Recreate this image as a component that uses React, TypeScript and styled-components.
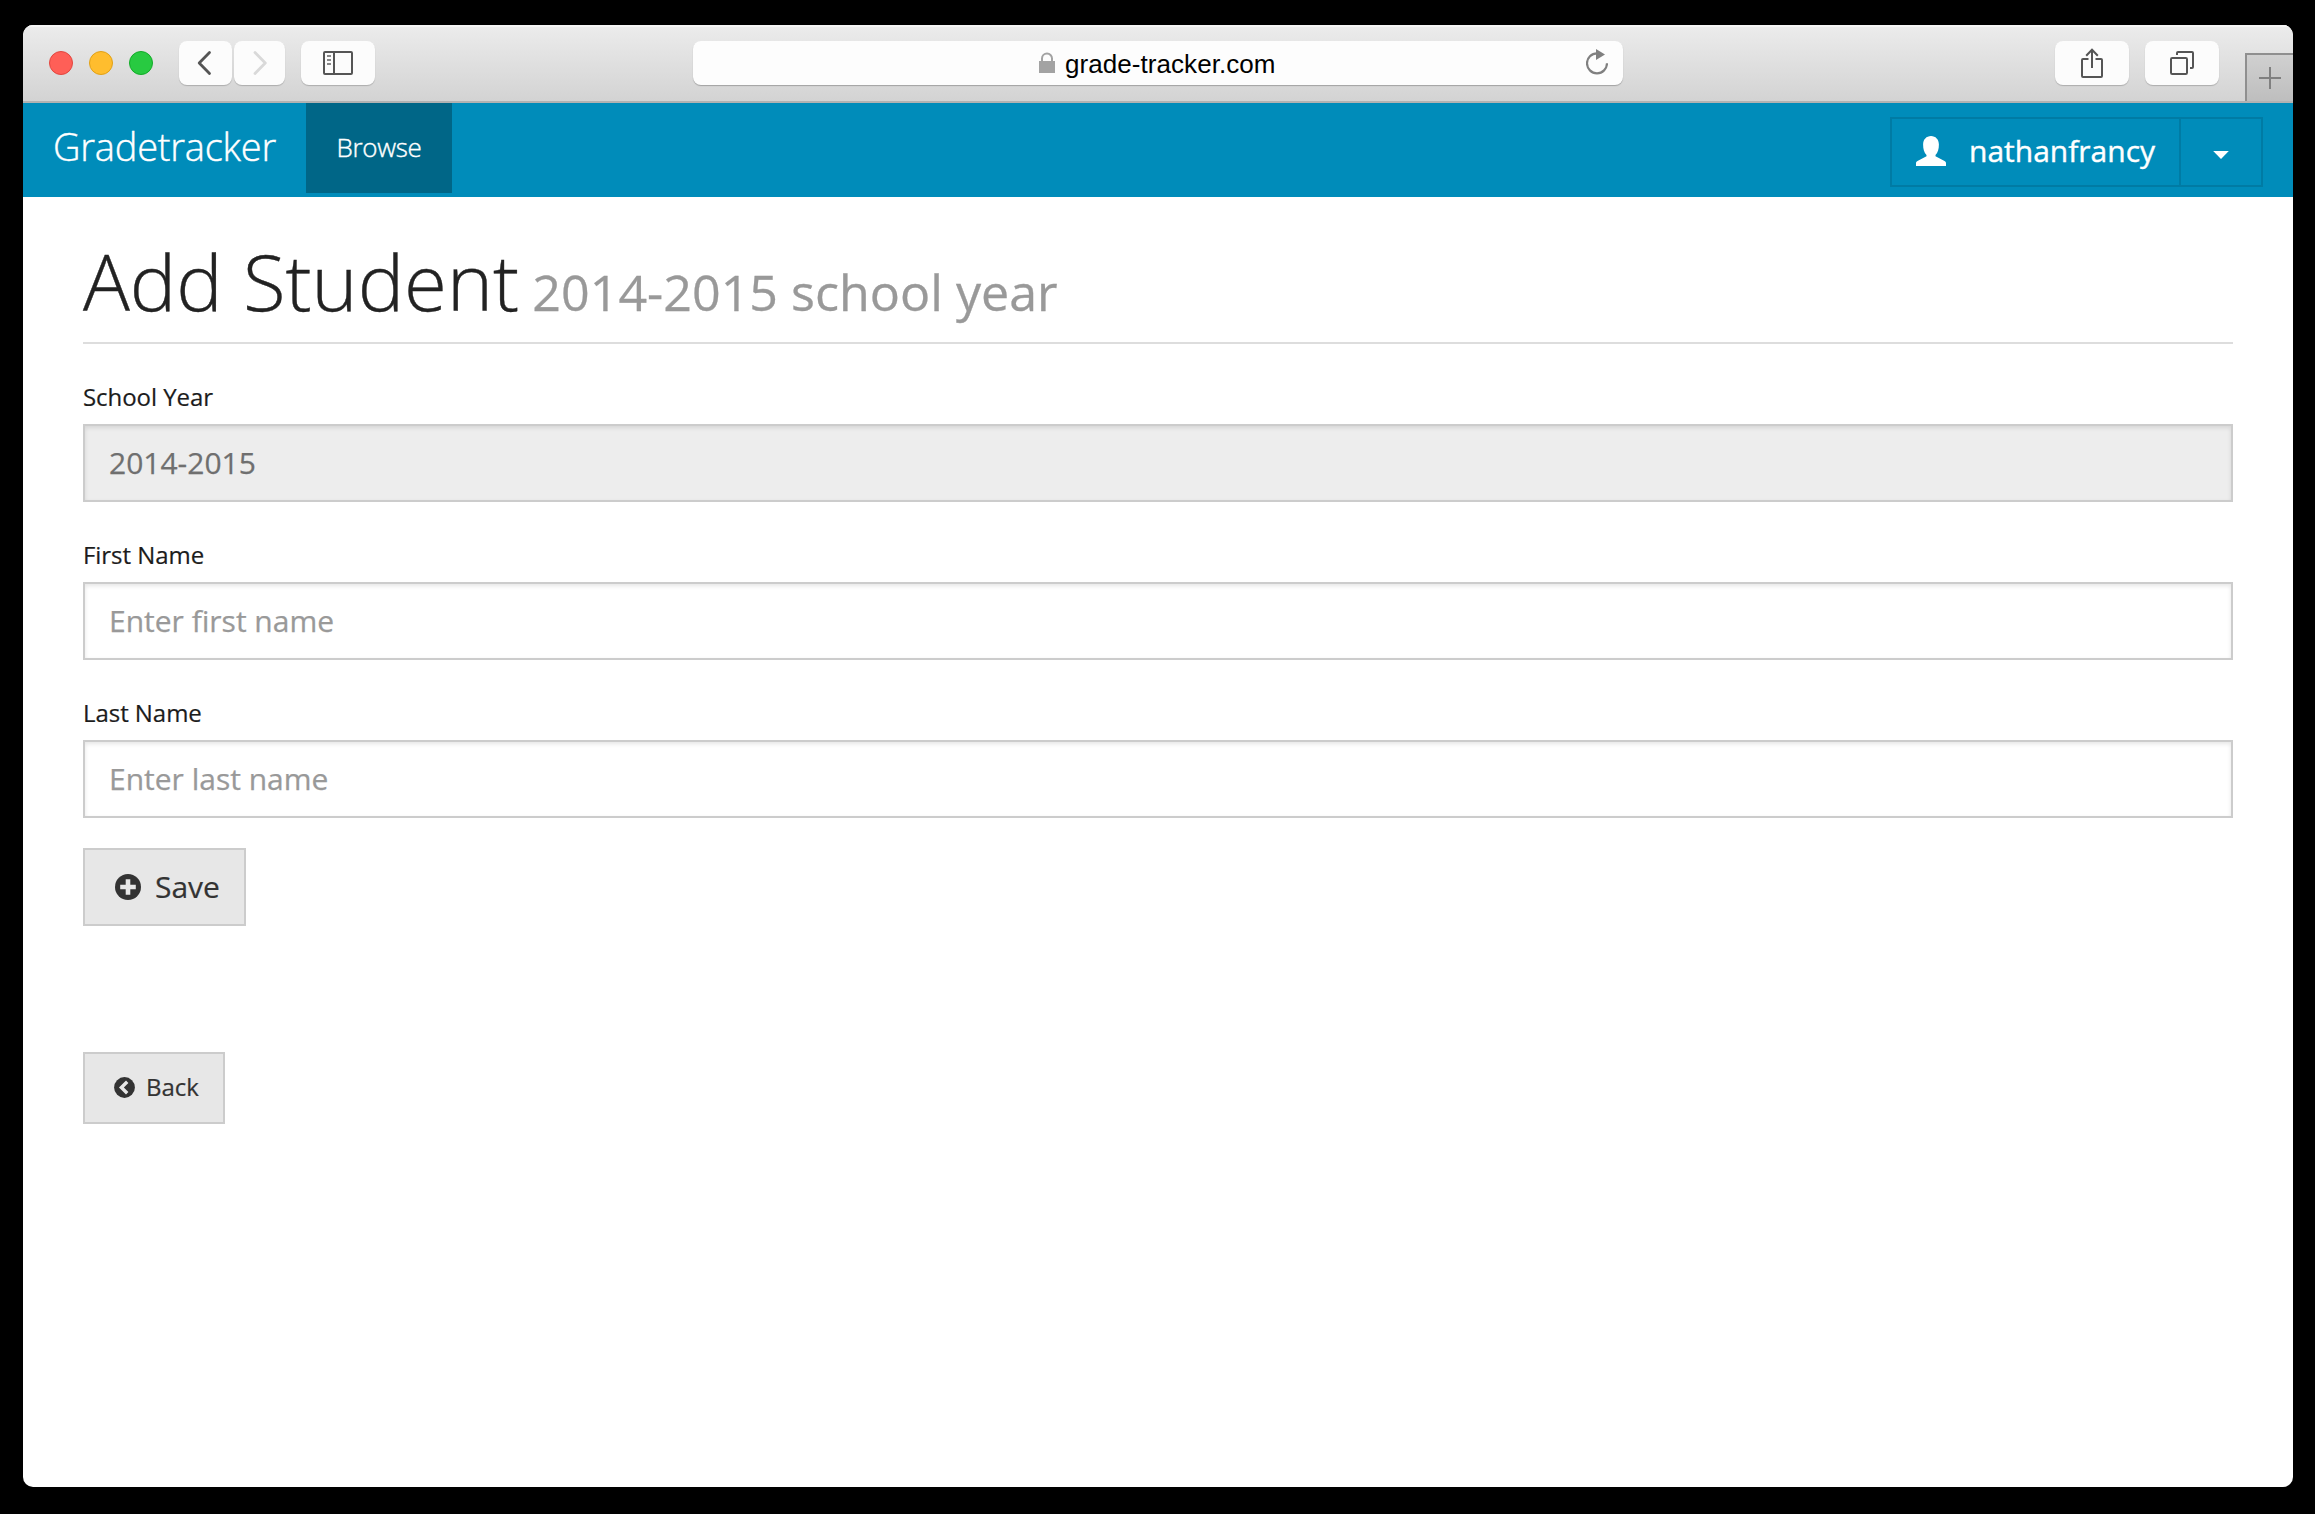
import React from 'react';
import styled, { createGlobalStyle } from 'styled-components';

const GlobalStyle = createGlobalStyle`
  *, *::before, *::after { box-sizing: border-box; }
  html, body { margin: 0; background: #000; }
  body { font-family: 'Open Sans', 'Liberation Sans', sans-serif; color: #222; }
  svg { display: block; flex: none; }
`;

const Desktop = styled.div`
  width: 2315px;
  height: 1514px;
  padding: 25px 22px 27px 23px;
  background: #000;
  overflow: hidden;
`;

const Window = styled.div`
  display: flex;
  flex-direction: column;
  height: 100%;
  border-radius: 10px;
  background: #fff;
  overflow: hidden;
`;

const Toolbar = styled.div`
  display: flex;
  align-items: flex-start;
  height: 78px;
  padding: 16px 0 0 26px;
  background: linear-gradient(#ececec, #d3d3d3);
  border-bottom: 2px solid #b2b2b2;
  box-shadow: inset 0 2px 0 #f5f5f5;
`;

const Lights = styled.div`
  display: flex;
  align-items: center;
  gap: 16px;
  height: 44px;
  margin-right: 26px;
`;

const Light = styled.span<{ $fill: string; $edge: string }>`
  width: 24px;
  height: 24px;
  border-radius: 50%;
  background: ${(p) => p.$fill};
  border: 1px solid ${(p) => p.$edge};
`;

const ToolButton = styled.button<{ $width?: number; $after?: number; $trail?: number }>`
  display: flex;
  align-items: center;
  justify-content: center;
  width: ${(p) => p.$width ?? 74}px;
  height: 44px;
  margin: 0 ${(p) => p.$after ?? 0}px 0 0;
  padding: 0 ${(p) => p.$trail ?? 0}px 0 0;
  border: 0;
  border-radius: 8px;
  background: #fcfcfc;
  box-shadow: 0 1px 1px rgba(0, 0, 0, 0.2);
`;

const AddressBar = styled.div`
  display: flex;
  align-items: center;
  width: 930px;
  height: 44px;
  margin: 0 432px 0 318px;
  padding: 0 15px 0 346px;
  border-radius: 8px;
  background: #fdfdfd;
  box-shadow: 0 1px 1px rgba(0, 0, 0, 0.25);
`;

const Address = styled.span`
  flex: 1;
  margin-left: 10px;
  font: 26px/44px 'Liberation Sans', sans-serif;
  letter-spacing: 0.06px;
  color: #000;
  padding-top: 2px;
`;

const NewTab = styled.button`
  display: flex;
  align-items: center;
  justify-content: center;
  width: 48px;
  height: 48px;
  margin: 12px 0 0 auto;
  padding: 0;
  border: solid #8f8f8f;
  border-width: 2px 0 0 2px;
  background: linear-gradient(#d0d0d0, #bebebe);
`;

const NavBar = styled.nav`
  display: flex;
  height: 94px;
  padding-left: 30px;
  background: #008cba;
  -webkit-text-stroke: 0.4px #fff;
`;

const Brand = styled.a`
  width: 253px;
  font-size: 38px;
  font-weight: 300;
  letter-spacing: -0.22px;
  line-height: 87px;
  color: #fff;
`;

const NavItem = styled.a`
  width: 146px;
  height: 90px;
  background: #006687;
  color: #fff;
  font-size: 26px;
  font-weight: 300;
  letter-spacing: -0.3px;
  line-height: 88px;
  text-align: center;
`;

const UserMenu = styled.div`
  display: flex;
  height: 70px;
  margin: 14px 30px 0 auto;
  border: 2px solid #007ba4;
  color: #fff;
`;

const UserName = styled.button`
  display: flex;
  align-items: center;
  width: 287px;
  padding: 0 0 3px 24px;
  border: 0;
  background: none;
  color: inherit;
  font: 30px/64px 'Open Sans', sans-serif;
  gap: 23px;
`;

const UserCaret = styled.button`
  display: flex;
  align-items: center;
  justify-content: center;
  width: 82px;
  padding: 6px 0 0;
  border: 0;
  border-left: 2px solid #007ba4;
  background: none;
`;

const Page = styled.main`
  flex: 1;
  padding: 22px 60px 0;
`;

const Title = styled.h1`
  height: 125px;
  margin: 0 0 35px;
  padding-top: 3px;
  border-bottom: 2px solid #ddd;
  font-size: 78px;
  font-weight: 300;
  line-height: 118px;
  color: #222;
  white-space: nowrap;
  -webkit-text-stroke: 0.4px #222;
`;

const Subtitle = styled.small`
  font-size: 50.2px;
  font-weight: 400;
  color: #999;
  margin-left: -7px;
  -webkit-text-stroke: 0.3px #999;
`;

const Field = styled.label`
  display: block;
  margin-bottom: 35px;
`;

const FieldLabel = styled.span`
  display: block;
  margin-bottom: 9px;
  font-size: 24px;
  letter-spacing: -0.05px;
  line-height: 36px;
  color: #1c1c1c;
  -webkit-text-stroke: 0.2px #1c1c1c;
`;

const TextInput = styled.input`
  display: block;
  width: 100%;
  height: 78px;
  padding: 0 24px 2px;
  border: 2px solid #ccc;
  border-radius: 0;
  background: #fff;
  box-shadow: inset 0 2px 4px rgba(0, 0, 0, 0.1);
  font: 30px 'Open Sans', sans-serif;
  color: #6f6f6f;
  -webkit-text-stroke: 0.25px currentColor;
  &::placeholder { color: #999; opacity: 1; }
  &:read-only { background: #ededed; }
`;

const ActionButton = styled.button<{ $small?: boolean }>`
  display: flex;
  align-items: center;
  gap: ${(p) => (p.$small ? 11 : 14)}px;
  width: ${(p) => (p.$small ? 142 : 163)}px;
  height: ${(p) => (p.$small ? 72 : 78)}px;
  margin-top: ${(p) => (p.$small ? 126 : -5)}px;
  padding: 0 0 ${(p) => (p.$small ? 2 : 0)}px ${(p) => (p.$small ? 29 : 30)}px;
  border: 2px solid #ccc;
  background: #e7e7e7;
  color: #333;
  font: ${(p) => (p.$small ? 24 : 30)}px 'Open Sans', sans-serif;
  -webkit-text-stroke: 0.2px #333;
`;

const ButtonText = styled.span`
  margin-top: -2px;
`;

const Chevron = ({ forward = false }: { forward?: boolean }) => (
  <svg width="16" height="26" viewBox="0 0 16 26" fill="none"
    stroke={forward ? '#d9d9d9' : '#555'} strokeWidth="2.8" strokeLinecap="round" strokeLinejoin="round">
    <path d={forward ? 'M3 2.5L13.3 13L3 23.5' : 'M13.5 2.5L3.2 13L13.5 23.5'} />
  </svg>
);

const SidebarIcon = () => (
  <svg width="30" height="24" viewBox="0 0 30 24" fill="none" stroke="#555" strokeWidth="2">
    <rect x="1" y="1" width="28" height="22" rx="1" />
    <path d="M11 1V23" />
    <path d="M4 5H8M4 9H8M4 13H8" stroke="#888" />
  </svg>
);

const LockIcon = () => (
  <svg width="16" height="22" viewBox="0 0 16 22">
    <rect y="9" width="16" height="12" fill="#a3a3a3" />
    <path d="M3 10V6.5a5 5 0 0 1 10 0V10" fill="none" stroke="#a3a3a3" strokeWidth="2" />
  </svg>
);

const ReloadIcon = () => (
  <svg width="22" height="28" viewBox="0 0 22 28">
    <path d="M11 4.3A10 10 0 1 0 21 14.3" fill="none" stroke="#808080" strokeWidth="2.2" />
    <path d="M10 0L19 5.5L10 11Z" fill="#808080" />
  </svg>
);

const ShareIcon = () => (
  <svg width="22" height="32" viewBox="0 0 22 32" fill="none" stroke="#555" strokeWidth="2">
    <path d="M7.5 12H2a1 1 0 0 0-1 1V29a1 1 0 0 0 1 1H20a1 1 0 0 0 1-1V13a1 1 0 0 0-1-1H14.5" />
    <path d="M11 21V3M5.2 8.7L11 2.7L16.8 8.7" />
  </svg>
);

const TabsIcon = () => (
  <svg width="24" height="24" viewBox="0 0 24 24" fill="none" stroke="#555" strokeWidth="2">
    <rect x="1" y="7" width="16" height="16" rx="1.2" />
    <path d="M7 4V2a1 1 0 0 1 1-1H22a1 1 0 0 1 1 1V16a1 1 0 0 1-1 1H20" />
  </svg>
);

const PlusIcon = () => (
  <svg width="22" height="22" viewBox="0 0 22 22" stroke="#808080" strokeWidth="2">
    <path d="M11 0V22M0 11H22" />
  </svg>
);

const PersonIcon = () => (
  <svg width="30" height="30" viewBox="0 0 30 30" fill="#fff">
    <path d="M15 0C10.4 0 7.1 3.5 7.1 8.5c0 4.4 1 8 3.4 10.6v1.2L1.5 25C.4 25.7 0 26.2 0 27.3V30H30V27.3c0-1.1-.4-1.6-1.5-2.3L19.5 20.3v-1.2c2.4-2.6 3.4-6.2 3.4-10.6C22.9 3.5 19.6 0 15 0Z" />
  </svg>
);

const CaretIcon = () => (
  <svg width="16" height="8" viewBox="0 0 16 8" fill="#fff"><path d="M.2 0H15.8L8 8Z" /></svg>
);

const PlusCircle = () => (
  <svg width="26" height="26" viewBox="0 0 26 26">
    <circle cx="13" cy="13" r="13" fill="#333" />
    <path d="M13 5.2V20.8M5.2 13H20.8" stroke="#e7e7e7" strokeWidth="4.6" />
  </svg>
);

const BackCircle = () => (
  <svg width="21" height="21" viewBox="0 0 21 21">
    <circle cx="10.5" cy="10.5" r="10.4" fill="#333" />
    <path d="M13.2 4.8L7.4 10.5L13.2 16.2" fill="none" stroke="#e7e7e7" strokeWidth="3.4" />
  </svg>
);

export default function App() {
  return (
    <Desktop>
      <GlobalStyle />
      <Window>
        <Toolbar>
          <Lights>
            <Light $fill="#ff5f57" $edge="#e2463f" />
            <Light $fill="#ffbd2e" $edge="#e1a116" />
            <Light $fill="#28ca41" $edge="#12ac28" />
          </Lights>
          <ToolButton $width={53} $after={2} $trail={4} aria-label="Back"><Chevron /></ToolButton>
          <ToolButton $width={51} $after={16} aria-label="Forward"><Chevron forward /></ToolButton>
          <ToolButton aria-label="Sidebar"><SidebarIcon /></ToolButton>
          <AddressBar>
            <LockIcon />
            <Address>grade-tracker.com</Address>
            <ReloadIcon />
          </AddressBar>
          <ToolButton $after={16} aria-label="Share"><ShareIcon /></ToolButton>
          <ToolButton aria-label="Tabs"><TabsIcon /></ToolButton>
          <NewTab aria-label="New tab"><PlusIcon /></NewTab>
        </Toolbar>
        <NavBar>
          <Brand>Gradetracker</Brand>
          <NavItem>Browse</NavItem>
          <UserMenu>
            <UserName><PersonIcon /><span>nathanfrancy</span></UserName>
            <UserCaret aria-label="Account menu"><CaretIcon /></UserCaret>
          </UserMenu>
        </NavBar>
        <Page>
          <Title>Add Student <Subtitle>2014-2015 school year</Subtitle></Title>
          <Field>
            <FieldLabel>School Year</FieldLabel>
            <TextInput readOnly value="2014-2015" />
          </Field>
          <Field>
            <FieldLabel>First Name</FieldLabel>
            <TextInput placeholder="Enter first name" />
          </Field>
          <Field>
            <FieldLabel>Last Name</FieldLabel>
            <TextInput placeholder="Enter last name" />
          </Field>
          <ActionButton><PlusCircle /><ButtonText>Save</ButtonText></ActionButton>
          <ActionButton $small><BackCircle /><ButtonText>Back</ButtonText></ActionButton>
        </Page>
      </Window>
    </Desktop>
  );
}
